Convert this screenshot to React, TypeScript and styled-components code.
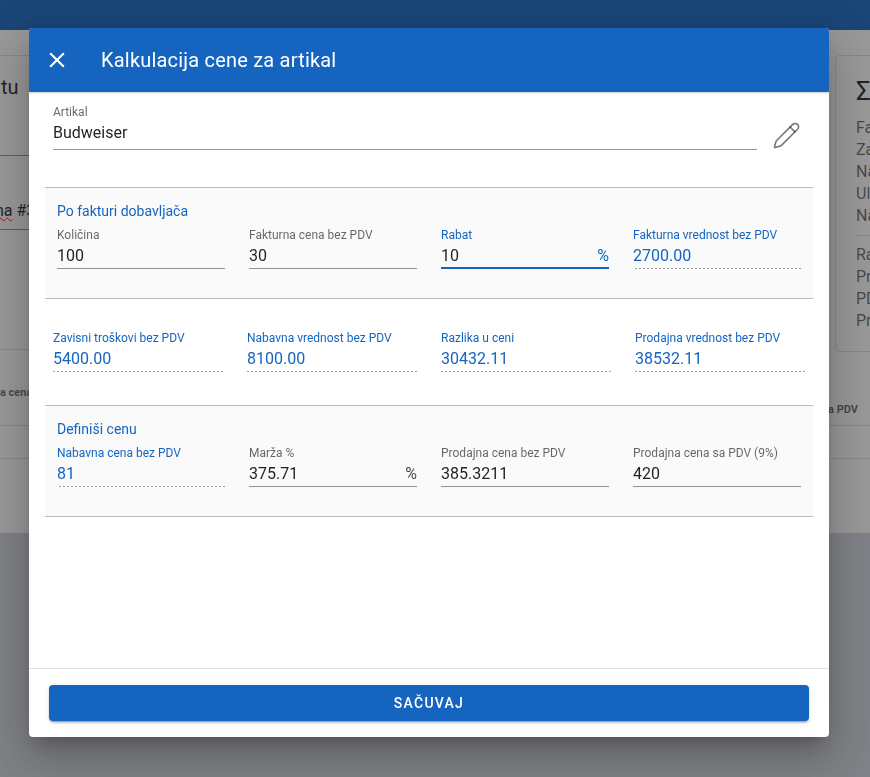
import React from 'react';

import { Pencil } from 'lucide-react';
import styled, { createGlobalStyle } from 'styled-components';

// Types
interface FieldProps {
  label: string;
  value: string;
  suffix?: string;
  computed?: boolean;
  focused?: boolean;
}

const BLUE = '#1565c0';

const supplierFields: FieldProps[] = [
  { label: 'Količina', value: '100' },
  { label: 'Fakturna cena bez PDV', value: '30' },
  { label: 'Rabat', value: '10', suffix: '%', focused: true },
  { label: 'Fakturna vrednost bez PDV', value: '2700.00', computed: true },
];

const totalFields: FieldProps[] = [
  { label: 'Zavisni troškovi bez PDV', value: '5400.00', computed: true },
  { label: 'Nabavna vrednost bez PDV', value: '8100.00', computed: true },
  { label: 'Razlika u ceni', value: '30432.11', computed: true },
  { label: 'Prodajna vrednost bez PDV', value: '38532.11', computed: true },
];

const priceFields: FieldProps[] = [
  { label: 'Nabavna cena bez PDV', value: '81', computed: true },
  { label: 'Marža %', value: '375.71', suffix: '%' },
  { label: 'Prodajna cena bez PDV', value: '385.3211' },
  { label: 'Prodajna cena sa PDV (9%)', value: '420' },
];

const Field = ({ label, value, suffix, computed, focused }: FieldProps) => (
  <FieldRoot>
    <FieldLabel $blue={computed || focused}>{label}</FieldLabel>
    <FieldInput $computed={computed} $focused={focused}>
      <FieldValue $blue={computed}>{value}</FieldValue>
      {suffix && <FieldSuffix $blue={focused}>{suffix}</FieldSuffix>}
    </FieldInput>
  </FieldRoot>
);

const App = () => {
  return (
    <>
      <GlobalStyle />
      <Page>
        <AppBar />
        <PageTop>
          <LeftColumn>
            <LeftHeading>tu</LeftHeading>
            <LeftInvoice>
              <span>
                <Misspelled>na</Misspelled> #3
              </span>
            </LeftInvoice>
          </LeftColumn>
          <SummaryCard>
            <SummaryTitle>Σ</SummaryTitle>
            <SummaryRow>Fa</SummaryRow>
            <SummaryRow>Za</SummaryRow>
            <SummaryRow>Na</SummaryRow>
            <SummaryRow>Ul</SummaryRow>
            <SummaryRow>Na</SummaryRow>
            <SummaryDivider />
            <SummaryRow>Ra</SummaryRow>
            <SummaryRow>Pr</SummaryRow>
            <SummaryRow>PD</SummaryRow>
            <SummaryRow>Pr</SummaryRow>
          </SummaryCard>
        </PageTop>
        <TableHead>
          <LeftHeadCell>a cena</LeftHeadCell>
          <RightHeadCell>a PDV</RightHeadCell>
        </TableHead>
        <TableRow />
      </Page>
      <Overlay />
      <Dialog>
        <DialogHeader>
          <CloseIcon viewBox='0 0 24 24'>
            <path d='M19,6.41L17.59,5L12,10.59L6.41,5L5,6.41L10.59,12L5,17.59L6.41,19L12,13.41L17.59,19L19,17.59L13.41,12L19,6.41Z' />
          </CloseIcon>
          <DialogTitle>Kalkulacija cene za artikal</DialogTitle>
        </DialogHeader>
        <DialogBody>
          <ArticleRow>
            <ArticleField>
              <FieldLabel>Artikal</FieldLabel>
              <ArticleValue>Budweiser</ArticleValue>
            </ArticleField>
            <EditIcon size={29} strokeWidth={1.3} />
          </ArticleRow>
          <TintedSection>
            <SectionTitle>Po fakturi dobavljača</SectionTitle>
            <TintedGrid>
              {supplierFields.map((field) => (
                <Field key={field.label} {...field} />
              ))}
            </TintedGrid>
          </TintedSection>
          <TotalsGrid>
            {totalFields.map((field) => (
              <Field key={field.label} {...field} />
            ))}
          </TotalsGrid>
          <TintedSection>
            <SectionTitle>Definiši cenu</SectionTitle>
            <TintedGrid>
              {priceFields.map((field) => (
                <Field key={field.label} {...field} />
              ))}
            </TintedGrid>
          </TintedSection>
        </DialogBody>
        <DialogFooter>
          <SaveButton>Sačuvaj</SaveButton>
        </DialogFooter>
      </Dialog>
    </>
  );
};

// Styled
const GlobalStyle = createGlobalStyle`
  html,
  body {
    margin: 0;
    height: 100%;
    overflow: hidden;
    font-family: Roboto, 'Liberation Sans', sans-serif;
  }
`;

const Page = styled.div`
  display: flex;
  flex-direction: column;
  height: 777px;
  background-color: #d3d5de;
`;

const AppBar = styled.div`
  flex: none;
  height: 30px;
  background-color: ${BLUE};
`;

const PageTop = styled.div`
  display: flex;
  flex: none;
  height: 322px;
  padding-top: 25px;
  box-sizing: border-box;
  background-color: #fff;
`;

const LeftColumn = styled.div`
  flex: none;
  width: 829px;
  height: 293px;
  border-top: 1px solid rgba(0, 0, 0, 0.12);
  border-bottom: 1px solid rgba(0, 0, 0, 0.12);
  color: rgba(0, 0, 0, 0.87);
`;

const LeftHeading = styled.div`
  height: 100px;
  padding: 18px 0 0 1px;
  box-sizing: border-box;
  border-bottom: 1px solid rgba(0, 0, 0, 0.42);
  font-size: 20px;
  line-height: 26px;
`;

const LeftInvoice = styled.div`
  display: flex;
  align-items: flex-end;
  height: 74px;
  margin-left: -5px;
  padding-bottom: 8px;
  box-sizing: border-box;
  border-bottom: 1px solid rgba(0, 0, 0, 0.42);
  font-size: 16px;
  line-height: 20px;
`;

const Misspelled = styled.span`
  text-decoration: underline wavy #ff1a1a 1px;
`;

const SummaryCard = styled.div`
  flex: none;
  width: 120px;
  height: 297px;
  margin-left: 6px;
  padding: 18px 20px;
  box-sizing: border-box;
  border: 1px solid rgba(0, 0, 0, 0.12);
  border-radius: 4px;
`;

const SummaryTitle = styled.div`
  height: 43px;
  font-size: 26px;
  line-height: 34px;
  color: rgba(0, 0, 0, 0.87);
`;

const SummaryRow = styled.div`
  font-size: 16px;
  line-height: 22px;
  color: rgba(0, 0, 0, 0.6);
`;

const SummaryDivider = styled.div`
  height: 1px;
  margin: 8px 0;
  background-color: rgba(0, 0, 0, 0.12);
`;

const TableHead = styled.div`
  display: flex;
  flex: none;
  justify-content: space-between;
  height: 74px;
  padding: 0 12px 0 0;
  box-sizing: border-box;
  border-bottom: 1px solid rgba(0, 0, 0, 0.12);
  background-color: #fff;
  font-size: 11px;
  font-weight: 700;
  line-height: 14px;
  color: rgba(0, 0, 0, 0.6);
`;

const LeftHeadCell = styled.span`
  margin-top: 34px;
`;

const RightHeadCell = styled.span`
  margin-top: 51px;
`;

const TableRow = styled.div`
  flex: none;
  height: 107px;
  border-top: 32px solid #fff;
  box-sizing: border-box;
  background-color: #fff;
  box-shadow: inset 0 1px 0 rgba(0, 0, 0, 0.12);
`;

const Overlay = styled.div`
  position: fixed;
  inset: 0;
  background-color: rgba(33, 33, 33, 0.46);
`;

const Dialog = styled.div`
  position: fixed;
  top: 28px;
  left: 29px;
  display: flex;
  flex-direction: column;
  width: 800px;
  height: 709px;
  border-radius: 4px;
  overflow: hidden;
  background-color: #fff;
  box-shadow:
    0 11px 15px -7px rgba(0, 0, 0, 0.2),
    0 24px 38px 3px rgba(0, 0, 0, 0.14),
    0 9px 46px 8px rgba(0, 0, 0, 0.12);
`;

const DialogHeader = styled.div`
  display: flex;
  flex: none;
  align-items: center;
  height: 64px;
  padding-left: 15px;
  box-sizing: border-box;
  background-color: ${BLUE};
  box-shadow: 0 1px 2px rgba(0, 0, 0, 0.2);
`;

const CloseIcon = styled.svg`
  width: 26px;
  height: 26px;
  fill: #fff;
`;

const DialogTitle = styled.div`
  margin-left: 31px;
  font-size: 20px;
  font-weight: 400;
  letter-spacing: 0.2px;
  color: #fff;
`;

const DialogBody = styled.div`
  display: flex;
  flex: 1;
  flex-direction: column;
  padding: 0 16px;
`;

const ArticleRow = styled.div`
  display: flex;
  flex: none;
  align-items: flex-start;
  height: 95px;
  padding: 13px 0 0 8px;
  box-sizing: border-box;
`;

const ArticleField = styled.div`
  flex: 1;
  height: 44px;
  border-bottom: 1px solid rgba(0, 0, 0, 0.42);
`;

const ArticleValue = styled.div`
  padding-top: 1px;
  font-size: 16px;
  line-height: 26px;
  color: rgba(0, 0, 0, 0.87);
`;

const EditIcon = styled(Pencil)`
  flex: none;
  margin: 16px 12px 0 15px;
  color: rgba(0, 0, 0, 0.54);
`;

const TintedSection = styled.section`
  flex: none;
  height: 112px;
  padding-top: 15px;
  box-sizing: border-box;
  border-top: 1px solid rgba(0, 0, 0, 0.26);
  border-bottom: 1px solid rgba(0, 0, 0, 0.26);
  background-color: #fafafa;
`;

const SectionTitle = styled.div`
  padding-left: 12px;
  font-size: 14px;
  line-height: 16px;
  color: ${BLUE};
`;

const TintedGrid = styled.div`
  --dash-offset: 2px;
  display: grid;
  grid-template-columns: repeat(4, 168px);
  gap: 24px;
  margin-top: 9px;
  padding-left: 12px;
`;

const TotalsGrid = styled.div`
  display: grid;
  flex: none;
  grid-template-columns: repeat(4, 170px);
  gap: 24px;
  height: 106px;
  padding: 32px 0 0 8px;
  box-sizing: border-box;
`;

const FieldRoot = styled.div`
  display: flex;
  flex-direction: column;
`;

const FieldLabel = styled.div<{ $blue?: boolean }>`
  font-size: 12px;
  line-height: 14px;
  white-space: nowrap;
  color: ${({ $blue }) => ($blue ? BLUE : 'rgba(0, 0, 0, 0.6)')};
`;

const FieldInput = styled.div<{ $computed?: boolean; $focused?: boolean }>`
  display: flex;
  align-items: center;
  justify-content: space-between;
  height: 27px;
  box-sizing: border-box;

  ${({ $computed, $focused }) => {
    if ($focused) {
      return `box-shadow: inset 0 -2px 0 ${BLUE};`;
    } else if ($computed) {
      return `
        background-image: linear-gradient(
          to right,
          rgba(0, 0, 0, 0.38) 0,
          rgba(0, 0, 0, 0.38) 2px,
          transparent 2px,
          transparent 4px
        );
        background-size: 4px 1px;
        background-position: var(--dash-offset, 0) bottom;
        background-repeat: repeat-x;
      `;
    } else {
      return `box-shadow: inset 0 -1px 0 rgba(0, 0, 0, 0.42);`;
    }
  }}
`;

const FieldValue = styled.span<{ $blue?: boolean }>`
  font-size: 16px;
  line-height: 20px;
  color: ${({ $blue }) => ($blue ? BLUE : 'rgba(0, 0, 0, 0.87)')};
`;

const FieldSuffix = styled.span<{ $blue?: boolean }>`
  font-size: 16px;
  line-height: 20px;
  color: ${({ $blue }) => ($blue ? BLUE : 'rgba(0, 0, 0, 0.75)')};
`;

const DialogFooter = styled.div`
  flex: none;
  padding: 16px 20px;
  border-top: 1px solid rgba(0, 0, 0, 0.12);
`;

const SaveButton = styled.button`
  display: block;
  width: 100%;
  height: 36px;
  padding: 0 16px;
  border: 0;
  border-radius: 4px;
  background-color: ${BLUE};
  color: #fff;
  font-family: inherit;
  font-size: 14px;
  font-weight: 500;
  letter-spacing: 1.25px;
  text-transform: uppercase;
  box-shadow:
    0 3px 1px -2px rgba(0, 0, 0, 0.2),
    0 2px 2px 0 rgba(0, 0, 0, 0.14),
    0 1px 5px 0 rgba(0, 0, 0, 0.12);
`;

export default App;
